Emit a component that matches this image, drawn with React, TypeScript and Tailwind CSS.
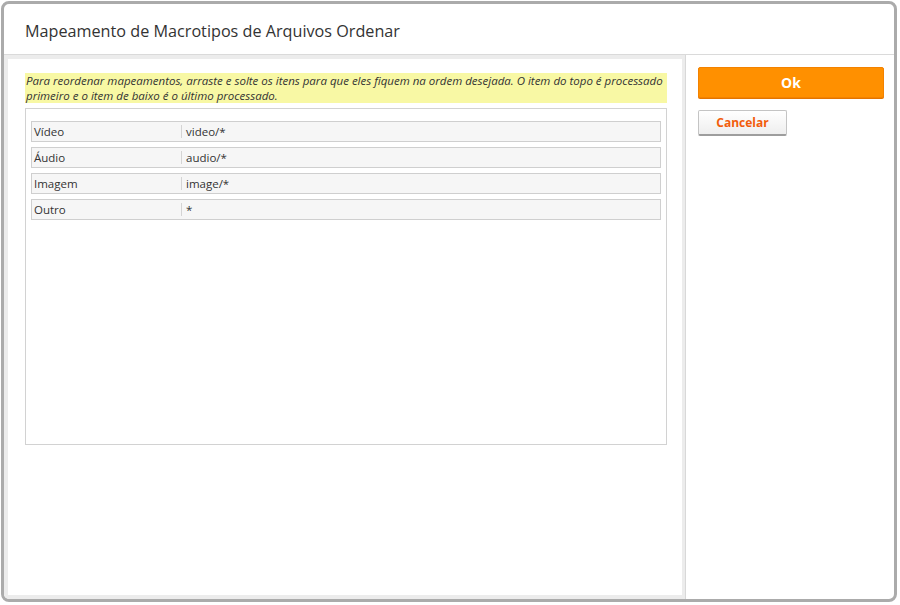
import React from "react";

const rows = [
  { name: "Vídeo", mime: "video/*" },
  { name: "Áudio", mime: "audio/*" },
  { name: "Imagem", mime: "image/*" },
  { name: "Outro", mime: "*" },
];

export default function App() {
  return (
    <div
      className="w-[900px] h-[605px] bg-white pt-[1px] pl-[1px]"
      style={{ fontFamily: '"Open Sans", "Noto Sans", sans-serif' }}
    >
      <div className="w-[896px] h-[601px] border-[3px] border-[#ababab] rounded-[8px] bg-white flex flex-col overflow-hidden">
        <div className="h-[51px] shrink-0 border-b border-[#dadada] flex items-center pl-[21px] pt-[5px]">
          <h1 className="text-[16.2px] text-[#333] leading-none">
            Mapeamento de Macrotipos de Arquivos Ordenar
          </h1>
        </div>
        <div className="flex flex-1 min-h-0">
          <div className="w-[682px] shrink-0 bg-[#ececec] p-[4px] pr-[3px] border-r border-[#d8d8d8]">
            <div className="h-full bg-white pt-[14px] pl-[17px] pr-[15px]">
              <div className="bg-[#f8f8a4] text-[11.5px] leading-[15px] italic text-[#333] pl-[1px] h-[30px]">
                Para reordenar mapeamentos, arraste e solte os itens para que eles fiquem na ordem desejada. O item do topo é processado primeiro e o item de baixo é o último processado.
              </div>
              <div className="mt-[5px] h-[337px] border border-[#d2d2d2] bg-white pt-[12px] px-[5px] flex flex-col gap-[5px]">
                {rows.map((r) => (
                  <div
                    key={r.name}
                    className="h-[21px] bg-[#f6f6f6] border border-[#cfcfcf] flex items-center text-[11.5px] text-[#333]"
                  >
                    <div className="w-[150px] pl-[2px] border-r border-[#d4d4d4] h-[13px] flex items-center">
                      {r.name}
                    </div>
                    <div className="pl-[4px]">{r.mime}</div>
                  </div>
                ))}
              </div>
            </div>
          </div>
          <div className="flex-1 pt-[12px] pl-[12px] pr-[10px] flex flex-col gap-[12px] items-start">
            <button className="w-full h-[31px] bg-[#ff9000] border border-[#f38200] rounded-[2px] shadow-[0_1px_0_#e37400] text-white font-bold text-[14px]">
              Ok
            </button>
            <button className="w-[89px] h-[26px] bg-gradient-to-b from-white to-[#eeeeee] border border-[#c4c4c4] border-b-[2px] border-b-[#9d9d9d] rounded-[2px] text-[#f25d0c] font-bold text-[12px]">
              Cancelar
            </button>
          </div>
        </div>
      </div>
    </div>
  );
}
